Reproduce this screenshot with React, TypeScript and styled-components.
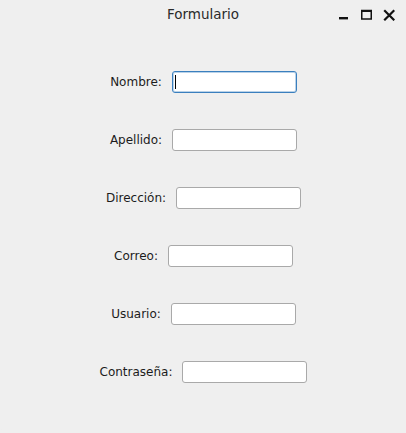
import styled, { createGlobalStyle } from 'styled-components'

const GlobalStyle = createGlobalStyle`
    html, body {
        margin: 0;
        padding: 0;
        background: #efefef;
    }
    * {
        box-sizing: border-box;
    }
`

const Window = styled.div`
    width: 406px;
    height: 433px;
    background: #efefef;
    font-family: "DejaVu Sans", "Liberation Sans", sans-serif;
    color: #1c1c1c;
    border-radius: 0 0 8px 8px;
    overflow: hidden;
`

const TitleBar = styled.div`
    height: 29px;
    display: grid;
    grid-template-columns: 1fr auto 1fr;
    align-items: center;
`

const Title = styled.div`
    grid-column: 2;
    font-size: 13.5px;
    color: #2a2a2a;
    padding-bottom: 1px;
`

const Controls = styled.div`
    grid-column: 3;
    justify-self: end;
    display: flex;
    align-items: center;
    gap: 11px;
    padding-right: 11px;
    padding-top: 1px;
`

const ControlIcon = styled.svg`
    display: block;
    width: 12px;
    height: 12px;
`

const Form = styled.form`
    display: flex;
    flex-direction: column;
    align-items: center;
    gap: 36px;
    padding-top: 42px;
    padding-left: 1px;
`

const Row = styled.div`
    display: flex;
    align-items: center;
    gap: 10px;
    height: 22px;
`

const Label = styled.label`
    font-size: 12px;
    color: #1c1c1c;
`

const Field = styled.div<{ $focused?: boolean }>`
    position: relative;
    width: 125px;
    height: 22px;
    input {
        width: 100%;
        height: 100%;
        margin: 0;
        padding: 0 4px;
        border: 1px solid ${p => (p.$focused ? '#3a7fbe' : '#a9a9a9')};
        box-shadow: ${p => (p.$focused ? 'inset 0 0 0 1px rgba(58,127,190,0.35)' : 'none')};
        border-radius: 3px;
        background: #fff;
        font-family: "DejaVu Sans", sans-serif;
        font-size: 12px;
        outline: none;
        caret-color: transparent;
    }
`

const Caret = styled.span`
    position: absolute;
    left: 3px;
    top: 4px;
    width: 1px;
    height: 14px;
    background: #000;
`

const fields = [
    { id: 'nombre', label: 'Nombre:', type: 'text' },
    { id: 'apellido', label: 'Apellido:', type: 'text' },
    { id: 'direccion', label: 'Dirección:', type: 'text' },
    { id: 'correo', label: 'Correo:', type: 'email' },
    { id: 'usuario', label: 'Usuario:', type: 'text' },
    { id: 'contrasena', label: 'Contraseña:', type: 'password' },
]

function App() {
    return (
        <>
            <GlobalStyle />
            <Window>
                <TitleBar>
                    <Title>Formulario</Title>
                    <Controls>
                        <ControlIcon viewBox="0 0 12 12">
                            <rect x="2" y="8" width="9" height="2.4" fill="#111" />
                        </ControlIcon>
                        <ControlIcon viewBox="0 0 12 12">
                            <rect x="1.75" y="1.5" width="9.5" height="8.5" fill="none" stroke="#111" strokeWidth="1.5" />
                            <rect x="1" y="1" width="11" height="2" fill="#111" />
                        </ControlIcon>
                        <ControlIcon viewBox="0 0 12 12">
                            <path d="M2 2 L10.5 10.5 M10.5 2 L2 10.5" stroke="#111" strokeWidth="2.2" strokeLinecap="square" />
                        </ControlIcon>
                    </Controls>
                </TitleBar>
                <Form onSubmit={e => e.preventDefault()}>
                    {fields.map((f, i) => (
                        <Row key={f.id}>
                            <Label htmlFor={f.id}>{f.label}</Label>
                            <Field $focused={i === 0}>
                                <input id={f.id} name={f.id} type={f.type} />
                                {i === 0 && <Caret />}
                            </Field>
                        </Row>
                    ))}
                </Form>
            </Window>
        </>
    )
}

export default App
